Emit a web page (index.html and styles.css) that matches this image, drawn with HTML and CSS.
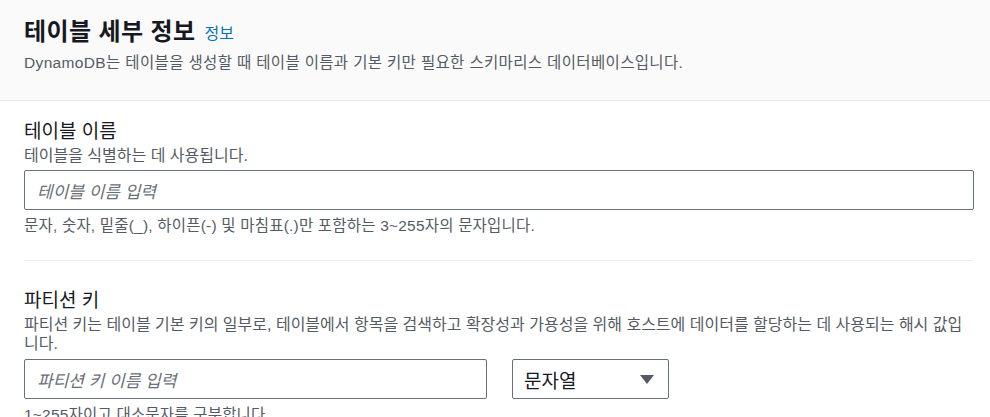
FILE: index.html
```html
<!DOCTYPE html>
<html lang="ko">
<head>
<meta charset="utf-8">
<link rel="stylesheet" href="styles.css">
</head>
<body>
<div class="container">
  <div class="header">
    <h2 class="title">테이블 세부 정보 <a class="info">정보</a></h2>
    <p class="header-desc">DynamoDB는 테이블을 생성할 때 테이블 이름과 기본 키만 필요한 스키마리스 데이터베이스입니다.</p>
  </div>
  <div class="body">
    <div class="field">
      <div class="label">테이블 이름</div>
      <div class="desc">테이블을 식별하는 데 사용됩니다.</div>
      <div class="input full"><span class="placeholder">테이블 이름 입력</span></div>
      <div class="hint">문자, 숫자, 밑줄(_), 하이픈(-) 및 마침표(.)만 포함하는 3~255자의 문자입니다.</div>
    </div>
    <div class="divider"></div>
    <div class="field">
      <div class="label">파티션 키</div>
      <div class="desc">파티션 키는 테이블 기본 키의 일부로, 테이블에서 항목을 검색하고 확장성과 가용성을 위해 호스트에 데이터를 할당하는 데 사용되는 해시 값입니다.</div>
      <div class="row">
        <div class="input half"><span class="placeholder">파티션 키 이름 입력</span></div>
        <div class="select"><span class="select-value">문자열</span><span class="caret"></span></div>
      </div>
      <div class="hint">1~255자이고 대소문자를 구분합니다.</div>
    </div>
  </div>
</div>
</body>
</html>
```

FILE: styles.css
```css
html, body {
  margin: 0;
  padding: 0;
  background: #ffffff;
}
body {
  font-family: "Liberation Sans", "Noto Sans CJK KR", sans-serif;
  color: #16191f;
  width: 990px;
  overflow: hidden;
}
.container {
  width: 990px;
}
.header {
  background: #fafafa;
  padding: 17px 24px 26px;
  border-bottom: 1px solid #eaeded;
}
.title {
  margin: 0;
  font-size: 24px;
  line-height: 30px;
  font-weight: 700;
  letter-spacing: 0.4px;
  color: #16191f;
}
.info {
  font-size: 16px;
  font-weight: 400;
  letter-spacing: 0;
  color: #0073bb;
  margin-left: 2px;
  vertical-align: 1px;
}
.header-desc {
  margin: 3px 0 0;
  font-size: 15.5px;
  line-height: 22px;
  letter-spacing: 0.35px;
  color: #545b64;
}
.body {
  padding: 20px 16px 0 24px;
}
.label {
  font-size: 19px;
  line-height: 22px;
  color: #16191f;
}
.desc {
  margin-top: 3px;
  font-size: 16px;
  line-height: 19px;
  color: #545b64;
}
.input {
  box-sizing: border-box;
  height: 40px;
  border: 1px solid #687078;
  border-radius: 2px;
  padding: 0 12px;
  display: flex;
  align-items: center;
  margin-top: 5px;
}
.input.half {
  width: 463px;
  margin-top: 0;
}
.placeholder {
  font-style: italic;
  font-size: 17px;
  color: #687078;
}
.hint {
  margin-top: 6px;
  font-size: 15.5px;
  line-height: 20px;
  letter-spacing: 0.2px;
  color: #545b64;
}
.divider {
  height: 1px;
  background: #eaeded;
  margin: 24px 0 29px;
}
.row {
  display: flex;
  gap: 25px;
  margin-top: 6px;
}
.select {
  box-sizing: border-box;
  width: 157px;
  height: 40px;
  border: 1px solid #687078;
  border-radius: 2px;
  padding: 0 14px 0 11px;
  display: flex;
  align-items: center;
  justify-content: space-between;
}
.select-value {
  font-size: 19px;
  color: #16191f;
}
.caret {
  width: 0;
  height: 0;
  border-left: 7px solid transparent;
  border-right: 7px solid transparent;
  border-top: 9px solid #545b64;
}
```
